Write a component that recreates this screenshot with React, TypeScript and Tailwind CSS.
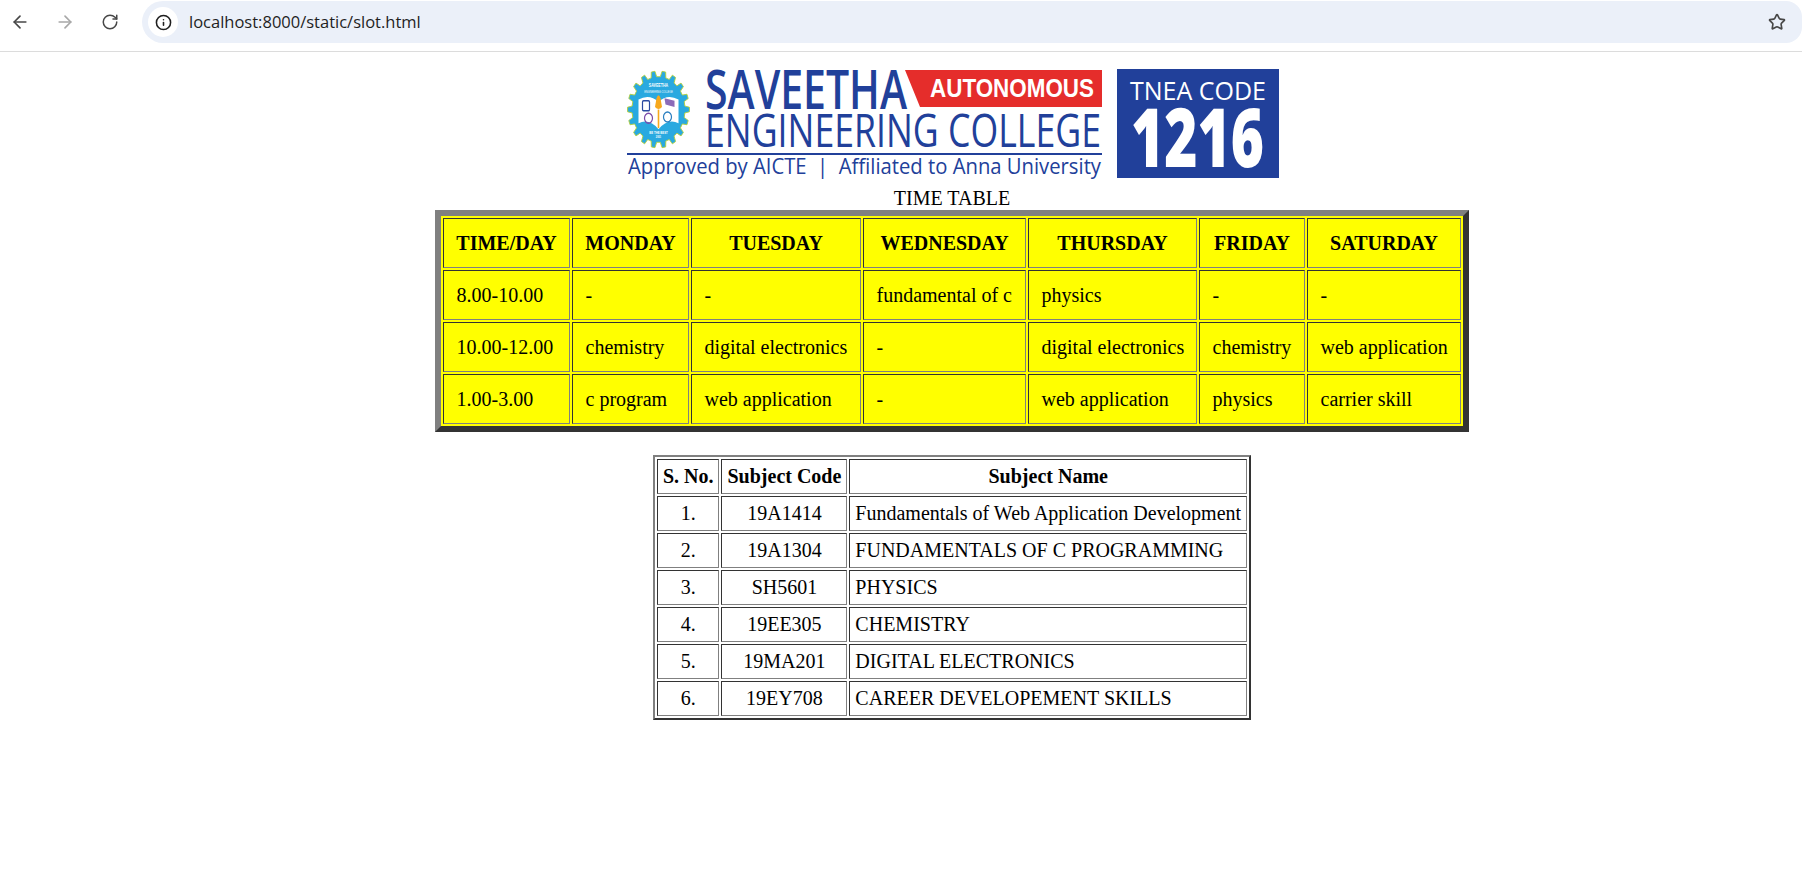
import React from 'react';
import { ArrowLeft, ArrowRight, RotateCw, Info, Star } from 'lucide-react';

const days = [
  { label: 'TIME/DAY', width: 'w-[127px]' },
  { label: 'MONDAY', width: 'w-[117px]' },
  { label: 'TUESDAY', width: 'w-[170px]' },
  { label: 'WEDNESDAY', width: 'w-[163px]' },
  { label: 'THURSDAY', width: 'w-[169px]' },
  { label: 'FRIDAY', width: 'w-[106px]' },
  { label: 'SATURDAY', width: 'w-[154px]' },
];

const timetable = [
  ['8.00-10.00', '-', '-', 'fundamental of c', 'physics', '-', '-'],
  ['10.00-12.00', 'chemistry', 'digital electronics', '-', 'digital electronics', 'chemistry', 'web application'],
  ['1.00-3.00', 'c program', 'web application', '-', 'web application', 'physics', 'carrier skill'],
];

const subjects = [
  ['1.', '19A1414', 'Fundamentals of Web Application Development'],
  ['2.', '19A1304', 'FUNDAMENTALS OF C PROGRAMMING'],
  ['3.', 'SH5601', 'PHYSICS'],
  ['4.', '19EE305', 'CHEMISTRY'],
  ['5.', '19MA201', 'DIGITAL ELECTRONICS'],
  ['6.', '19EY708', 'CAREER DEVELOPEMENT SKILLS'],
];

// gear outline for the college crest
const gearPoints = () => {
  const pts: string[] = [];
  const teeth = 18;
  for (let i = 0; i < teeth; i++) {
    const a = (i / teeth) * Math.PI * 2;
    const step = (Math.PI * 2) / teeth;
    [
      [a - step * 0.3, 26.5],
      [a - step * 0.17, 31],
      [a + step * 0.17, 31],
      [a + step * 0.3, 26.5],
    ].forEach(([t, r]) => pts.push(`${(r * Math.cos(t)).toFixed(2)},${(r * Math.sin(t)).toFixed(2)}`));
  }
  return pts.join(' ');
};

const Logo = () => (
  <svg width="664" height="112" viewBox="620 68 664 112" className="block mx-auto overflow-visible">
    {/* crest, the logo picture is stretched tall in the page */}
    <g transform="translate(658.5 109.500) scale(1 1.240)">
      <polygon points={gearPoints()} fill="#29a9e0" stroke="#b5cf3a" strokeWidth="0.800" />
      <path d="M-20 -8 Q-9 -13 0 -6 Q9 -13 20 -8 L20 11 Q9 7 0 16 Q-9 7 -20 11 Z" fill="#fff" />
      <rect x="-16" y="-7" width="7" height="8" rx="1" fill="#fff" stroke="#2b4aa0" strokeWidth="1.200" />
      <circle cx="-10" cy="7" r="4" fill="none" stroke="#7b4aa8" strokeWidth="1.200" />
      <path d="M6 -9 l10 2 v5 l-9 -2 z" fill="#8b6bb8" />
      <circle cx="9" cy="6" r="4" fill="none" stroke="#2b7fc0" strokeWidth="1.200" />
      <path d="M-2 -9 Q0 -14 2 -9 L3.500 -2 Q0 1 -3.500 -2 Z" fill="#f7a81c" />
      <rect x="-0.800" y="0" width="1.600" height="15" fill="#f7a81c" />
      <text x="0" y="-18.500" textAnchor="middle" fontFamily="'Liberation Sans', sans-serif" fontSize="3.600" fontWeight="700" fill="#fff">SAVEETHA</text>
      <text x="0" y="-13.500" textAnchor="middle" fontFamily="'Liberation Sans', sans-serif" fontSize="2.400" fill="#fff">ENGINEERING COLLEGE</text>
      <text x="0" y="19.500" textAnchor="middle" fontFamily="'Liberation Sans', sans-serif" fontSize="2.800" fontWeight="700" fill="#fff">BE THE BEST</text>
      <text x="0" y="23" textAnchor="middle" fontFamily="'Liberation Sans', sans-serif" fontSize="2.400" fontWeight="700" fill="#fff">2001</text>
    </g>

    {/* wordmark */}
    <text x="705" y="109" textLength="202" lengthAdjust="spacingAndGlyphs" fontFamily="'Open Sans', sans-serif" fontSize="54" fontWeight="600" fill="#21409a">SAVEETHA</text>
    <polygon points="905,70 1102,70 1102,107 920,107" fill="#e52d2b" />
    <text x="930" y="97" textLength="164" lengthAdjust="spacingAndGlyphs" fontFamily="'Liberation Sans', sans-serif" fontSize="26" fontWeight="700" fill="#fff">AUTONOMOUS</text>
    <text x="705" y="147" textLength="396" lengthAdjust="spacingAndGlyphs" fontFamily="'Open Sans', sans-serif" fontSize="45" fontWeight="500" fill="#21409a">ENGINEERING COLLEGE</text>
    <rect x="627" y="153" width="475" height="2" fill="#21409a" />
    <text x="628" y="174" textLength="473" lengthAdjust="spacingAndGlyphs" fontFamily="'Open Sans', sans-serif" fontSize="22" fontWeight="500" fill="#21409a" xmlSpace="preserve">Approved by AICTE  |  Affiliated to Anna University</text>

    {/* TNEA badge */}
    <rect x="1117" y="69" width="162" height="109" fill="#21409a" />
    <text x="1130" y="100" textLength="136" lengthAdjust="spacingAndGlyphs" fontFamily="'Open Sans', sans-serif" fontSize="26" fill="#fff">TNEA CODE</text>
    <text x="1131" y="167" textLength="133" lengthAdjust="spacingAndGlyphs" fontFamily="'Open Sans', sans-serif" fontSize="82" fontWeight="800" fill="#fff">1216</text>
  </svg>
);

const App = () => {
  return (
    <div className="min-h-[896px] bg-white">
      {/* Browser toolbar */}
      <div className="h-[52px] border-b border-[#dcdcdc] flex items-center pb-[8px] pt-px">
        <div className="w-[142px] flex-none flex items-center text-[#474747]">
          <ArrowLeft className="w-[20px] h-[20px] ml-[10px]" strokeWidth={2} />
          <ArrowRight className="w-[20px] h-[20px] ml-[25px] text-[#a8a8a8]" strokeWidth={2} />
          <RotateCw className="w-[18px] h-[18px] ml-[26px]" strokeWidth={2} />
        </div>
        <div className="flex-1 h-[42px] bg-[#ebf0f9] rounded-l-[21px] rounded-r-[16px] flex items-center pl-[6px] pr-[16px]">
          <div className="w-[30px] h-[30px] rounded-full bg-white flex items-center justify-center">
            <Info className="w-[17px] h-[17px] text-[#1f1f1f]" strokeWidth={2.2} />
          </div>
          <span className="ml-[11px] text-[16.500px] text-[#1f1f1f] font-['Open_Sans',sans-serif] flex-1">localhost:8000/static/slot.html</span>
          <Star className="w-[18px] h-[18px] text-[#474747]" strokeWidth={2.2} />
        </div>
      </div>

      {/* Page, centred a little right of the window as in the capture */}
      <div className="pl-[102px] pt-[16px] font-['Liberation_Serif',serif] text-[20px] text-black text-center">
        <Logo />
        <div className="leading-[23px] mt-[7px]">TIME TABLE</div>

        <table className="mx-auto w-[1034px] table-fixed border-separate border-spacing-[2px] bg-[#ffff00] border-[6px] border-t-[#808080] border-l-[#808080] border-r-[#333333] border-b-[#333333]">
          <thead>
            <tr>
              {days.map((d) => (
                <th key={d.label} className={`${d.width} p-0 h-[50px] leading-[22px] font-bold text-center border border-t-[#333333] border-l-[#333333] border-r-[#808080] border-b-[#808080]`}>
                  {d.label}
                </th>
              ))}
            </tr>
          </thead>
          <tbody>
            {timetable.map((row) => (
              <tr key={row[0]}>
                {row.map((c, i) => (
                  <td key={i} className="pl-[12.500px] pr-0 h-[50px] leading-[22px] text-left whitespace-nowrap border border-t-[#333333] border-l-[#333333] border-r-[#808080] border-b-[#808080]">
                    {c}
                  </td>
                ))}
              </tr>
            ))}
          </tbody>
        </table>

        <table className="mx-auto mt-[23px] border-separate border-spacing-[2px] border-[2px] border-t-[#808080] border-l-[#808080] border-r-[#333333] border-b-[#333333]">
          <thead>
            <tr>
              {['S. No.', 'Subject Code', 'Subject Name'].map((h) => (
                <th key={h} className="px-[5px] py-[5px] leading-[23px] font-bold text-center border border-t-[#333333] border-l-[#333333] border-r-[#808080] border-b-[#808080]">
                  {h}
                </th>
              ))}
            </tr>
          </thead>
          <tbody>
            {subjects.map((row) => (
              <tr key={row[0]}>
                <td className="px-[5px] py-[5px] leading-[23px] text-center border border-t-[#333333] border-l-[#333333] border-r-[#808080] border-b-[#808080]">{row[0]}</td>
                <td className="px-[5px] py-[5px] leading-[23px] text-center border border-t-[#333333] border-l-[#333333] border-r-[#808080] border-b-[#808080]">{row[1]}</td>
                <td className="px-[5px] py-[5px] leading-[23px] text-left border border-t-[#333333] border-l-[#333333] border-r-[#808080] border-b-[#808080]">{row[2]}</td>
              </tr>
            ))}
          </tbody>
        </table>
      </div>
    </div>
  );
};

export default App;
